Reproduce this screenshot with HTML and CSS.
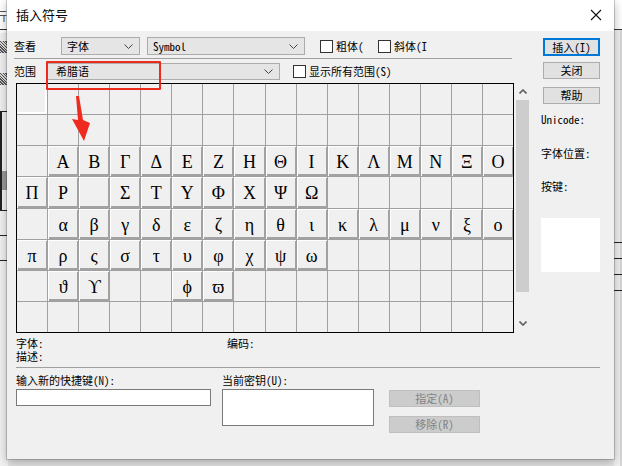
FILE: index.html
```html
<!DOCTYPE html>
<html lang="zh-CN">
<head>
    <meta charset="UTF-8">
    <title>插入符号</title>
    <link rel="stylesheet" href="styles.css">
</head>
<body>
<div class="desktop">

    <!-- the window behind the dialog -->
    <div class="app">
        <div class="app-bar"><span class="app-title">行</span></div>
        <div class="app-body">
            <div class="app-side">
                <div class="hatch"></div>
                <div class="hatch"></div>
                <div class="frame"></div>
                <div class="tick"></div>
                <div class="tick"></div>
            </div>
            <div class="app-fill"></div>
            <div class="app-edge">
                <div class="rule"></div>
                <div class="rule"></div>
                <div class="rule"></div>
                <div class="rule"></div>
            </div>
        </div>
    </div>

    <div class="dialog">
        <div class="titlebar">
            <span class="title">插入符号</span>
            <svg class="close" width="12" height="12" viewBox="0 0 12 12"><path d="M1 1 L11 11 M11 1 L1 11" stroke="#111" stroke-width="1.1"/></svg>
        </div>

        <div class="dialog-body">
            <div class="main">
                <div class="row row-view">
                    <span class="lbl lbl-view">查看</span>
                    <div class="select sel-kind"><span>字体</span><svg width="9" height="5" viewBox="0 0 9 5"><path d="M0.5 0.5 L4.5 4.5 L8.5 0.5" fill="none" stroke="#444"/></svg></div>
                    <div class="select sel-font"><span>Symbol</span><svg width="9" height="5" viewBox="0 0 9 5"><path d="M0.5 0.5 L4.5 4.5 L8.5 0.5" fill="none" stroke="#444"/></svg></div>
                    <span class="check check-bold"><span class="box"></span>粗体(</span>
                    <span class="check"><span class="box"></span>斜体(I</span>
                </div>
                <div class="sep"></div>
                <div class="row row-range">
                    <span class="lbl lbl-range">范围</span>
                    <div class="select sel-range"><span>希腊语</span><svg width="9" height="5" viewBox="0 0 9 5"><path d="M0.5 0.5 L4.5 4.5 L8.5 0.5" fill="none" stroke="#444"/></svg></div>
                    <span class="check check-all"><span class="box"></span>显示所有范围(S)</span>
                </div>

                <div class="chart">
                    <div class="grid">
                        <!-- row 1 -->
                        <span class="cell focus"></span><span class="cell"></span><span class="cell"></span><span class="cell"></span><span class="cell"></span><span class="cell"></span><span class="cell"></span><span class="cell"></span><span class="cell"></span><span class="cell"></span><span class="cell"></span><span class="cell"></span><span class="cell"></span><span class="cell"></span><span class="cell"></span><span class="cell"></span>
                        <!-- row 2 -->
                        <span class="cell"></span><span class="cell"></span><span class="cell"></span><span class="cell"></span><span class="cell"></span><span class="cell"></span><span class="cell"></span><span class="cell"></span><span class="cell"></span><span class="cell"></span><span class="cell"></span><span class="cell"></span><span class="cell"></span><span class="cell"></span><span class="cell"></span><span class="cell"></span>
                        <!-- row 3: U+0390 -->
                        <span class="cell"></span><span class="cell on">Α</span><span class="cell on">Β</span><span class="cell on">Γ</span><span class="cell on">Δ</span><span class="cell on">Ε</span><span class="cell on">Ζ</span><span class="cell on">Η</span><span class="cell on">Θ</span><span class="cell on">Ι</span><span class="cell on">Κ</span><span class="cell on">Λ</span><span class="cell on">Μ</span><span class="cell on">Ν</span><span class="cell on">Ξ</span><span class="cell on">Ο</span>
                        <!-- row 4: U+03A0 -->
                        <span class="cell on">Π</span><span class="cell on">Ρ</span><span class="cell on"></span><span class="cell on">Σ</span><span class="cell on">Τ</span><span class="cell on">Υ</span><span class="cell on">Φ</span><span class="cell on">Χ</span><span class="cell on">Ψ</span><span class="cell on">Ω</span><span class="cell"></span><span class="cell"></span><span class="cell"></span><span class="cell"></span><span class="cell"></span><span class="cell"></span>
                        <!-- row 5: U+03B0 -->
                        <span class="cell"></span><span class="cell on">α</span><span class="cell on">β</span><span class="cell on">γ</span><span class="cell on">δ</span><span class="cell on">ε</span><span class="cell on">ζ</span><span class="cell on">η</span><span class="cell on">θ</span><span class="cell on">ι</span><span class="cell on">κ</span><span class="cell on">λ</span><span class="cell on">μ</span><span class="cell on">ν</span><span class="cell on">ξ</span><span class="cell on">ο</span>
                        <!-- row 6: U+03C0 -->
                        <span class="cell on">π</span><span class="cell on">ρ</span><span class="cell on">ς</span><span class="cell on">σ</span><span class="cell on">τ</span><span class="cell on">υ</span><span class="cell on">φ</span><span class="cell on">χ</span><span class="cell on">ψ</span><span class="cell on">ω</span><span class="cell"></span><span class="cell"></span><span class="cell"></span><span class="cell"></span><span class="cell"></span><span class="cell"></span>
                        <!-- row 7: U+03D0 -->
                        <span class="cell"></span><span class="cell on">ϑ</span><span class="cell on">ϒ</span><span class="cell"></span><span class="cell"></span><span class="cell on">ϕ</span><span class="cell on">ϖ</span><span class="cell"></span><span class="cell"></span><span class="cell"></span><span class="cell"></span><span class="cell"></span><span class="cell"></span><span class="cell"></span><span class="cell"></span><span class="cell"></span>
                        <!-- row 8 -->
                        <span class="cell"></span><span class="cell"></span><span class="cell"></span><span class="cell"></span><span class="cell"></span><span class="cell"></span><span class="cell"></span><span class="cell"></span><span class="cell"></span><span class="cell"></span><span class="cell"></span><span class="cell"></span><span class="cell"></span><span class="cell"></span><span class="cell"></span><span class="cell"></span>
                    </div>
                    <div class="scroll">
                        <svg class="arrow-up" width="8" height="5" viewBox="0 0 8 5"><path d="M0.5 4.5 L4 1 L7.5 4.5" fill="none" stroke="#606060" stroke-width="1.6"/></svg>
                        <div class="thumb"></div>
                        <svg class="arrow-down" width="8" height="5" viewBox="0 0 8 5"><path d="M0.5 0.5 L4 4 L7.5 0.5" fill="none" stroke="#606060" stroke-width="1.6"/></svg>
                    </div>
                </div>

                <div class="info info-top">
                    <span class="info-font">字体:</span><span>编码:</span>
                </div>
                <div class="info">描述:</div>

                <!-- annotation drawn over the dialog -->
                <div class="mark"></div>
                <svg class="pointer" width="22" height="47" viewBox="0 0 22 47"><path d="M6 1 L9 1 L13 25 L20 28 L14 46 L2 24 L8 25 Z" fill="#ef2a1f"/></svg>
            </div>

            <div class="side">
                <button class="btn btn-default">插入(I)</button>
                <button class="btn btn-close">关闭</button>
                <button class="btn btn-help">帮助</button>
                <div class="side-lbl side-code">Unicode:</div>
                <div class="side-lbl side-pos">字体位置:</div>
                <div class="side-lbl side-key">按键:</div>
                <div class="preview"></div>
            </div>

            <div class="bottom">
                <div class="sep-wide"></div>
                <div class="keys">
                    <div class="key-new">
                        <div class="key-lbl">输入新的快捷键(N):</div>
                        <div class="field"></div>
                    </div>
                    <div class="key-cur">
                        <div class="key-lbl">当前密钥(U):</div>
                        <div class="field field-tall"></div>
                    </div>
                    <div class="key-btns">
                        <button class="btn-off">指定(A)</button>
                        <button class="btn-off">移除(R)</button>
                    </div>
                </div>
            </div>
        </div>
    </div>
</div>
</body>
</html>
```

FILE: styles.css
```css
* {
    box-sizing: border-box;
}

body {
    margin: 0;
    width: 622px;
    height: 466px;
    overflow: hidden;
    background: #e6e6e6;
    color: #000;
    font-family: "Noto Sans Mono CJK SC", "Liberation Mono", "Noto Sans CJK SC", monospace;
    font-size: 11px;
    line-height: 13px;
}

.desktop {
    position: relative;
    width: 622px;
    height: 466px;
}

/* background window */
.app {
    height: 100%;
    display: flex;
    flex-direction: column;
}

.app-bar {
    height: 30px;
    background: #fff;
    border-bottom: 1px solid #333;
    padding-top: 9px;
    overflow: hidden;
}

.app-title {
    display: block;
    width: 7px;
    overflow: hidden;
    direction: rtl;
    font-family: "Noto Sans CJK SC", sans-serif;
    font-size: 13px;
    color: #555;
}

.app-body {
    flex: 1;
    display: flex;
}

.app-side {
    width: 8px;
    background: #f2f2f2;
    border-top: 3px solid #fff;
    display: flex;
    flex-direction: column;
}

.hatch {
    height: 12px;
    margin: 8px 0 12px 0;
    background: repeating-linear-gradient(45deg, #555 0 1px, #ddd 1px 2px);
}

.frame {
    height: 100px;
    margin-top: 14px;
    border-top: 1px solid #222;
    border-left: 2px solid #222;
    border-bottom: 1px solid #222;
    background: linear-gradient(#f2f2f2 0 60%, #9a9a9a 60% 80%, #f2f2f2 80%);
}

.tick {
    height: 1px;
    margin-top: 24px;
    background: #222;
}

.app-fill {
    flex: 1;
}

.app-edge {
    width: 8px;
    margin-left: auto;
    background: linear-gradient(90deg, #f0f0f0 0 6px, #d6d6d6 6px);
    padding-top: 212px;
}

.rule {
    height: 1px;
    background: #222;
    margin-bottom: 15px;
}

/* dialog */
.dialog {
    position: absolute;
    left: 7px;
    top: 0;
    width: 607px;
    height: 459px;
    background: #f0f0f0;
    box-shadow: 0 0 0 1px rgba(0, 0, 0, 0.18), 0 3px 10px rgba(0, 0, 0, 0.3);
}

.titlebar {
    height: 31px;
    background: #fff;
    display: flex;
    align-items: center;
    justify-content: space-between;
    padding: 0 12px 2px 9px;
}

.title {
    font-family: "Noto Sans CJK SC", sans-serif;
    font-size: 13px;
}

.dialog-body {
    display: grid;
    grid-template-columns: 515px 60px;
    column-gap: 12px;
    padding: 6px 13px 0 7px;
}

.main {
    position: relative;
}

.row {
    display: flex;
    align-items: center;
}

.row-view {
    height: 18px;
}

.row-range {
    height: 17px;
    margin-top: 4px;
}

.lbl-view {
    width: 47px;
}

.lbl-range {
    width: 32px;
}

.select {
    height: 100%;
    display: flex;
    align-items: center;
    justify-content: space-between;
    padding: 0 6px 0 5px;
    background: #e5e5e5;
    border: 1px solid #acacac;
}

.sel-kind {
    width: 79px;
}

.sel-font {
    width: 158px;
    margin-left: 7px;
}

.sel-range {
    width: 234px;
    padding-left: 9px;
}

.check {
    display: flex;
    align-items: center;
    gap: 3px;
}

.box {
    width: 13px;
    height: 13px;
    background: #fff;
    border: 1px solid #333;
}

.check-bold {
    width: 58px;
    margin-left: 15px;
}

.check-all {
    margin-left: 13px;
}

.sep {
    width: 498px;
    height: 1px;
    margin-top: 3px;
    background: #a0a0a0;
}

/* character map */
.chart {
    display: flex;
    height: 250px;
    margin-top: 3px;
}

.grid {
    width: 498px;
    margin-left: 2px;
    display: grid;
    grid-template-columns: repeat(16, 1fr);
    grid-template-rows: repeat(8, 1fr);
    gap: 1px;
    background: #a0a0a0;
    border: 1px solid #000;
}

.cell {
    background: #f0f0f0;
    display: flex;
    align-items: center;
    justify-content: center;
    padding-top: 2px;
    font-family: "Liberation Serif", "DejaVu Serif", serif;
    font-size: 18px;
    line-height: 1;
}

.cell.on {
    box-shadow: inset 1px 1px 0 #fff, inset -1px -2px 0 #a2a2a2;
}

.cell.focus {
    box-shadow: inset -2px -2px 0 #fff;
}

.scroll {
    width: 13px;
    margin-left: 2px;
    display: flex;
    flex-direction: column;
    align-items: center;
}

.arrow-up {
    margin-top: 6px;
}

.thumb {
    width: 13px;
    height: 192px;
    margin-top: 6px;
    background: #cdcdcd;
}

.arrow-down {
    margin-top: 29px;
}

.info {
    display: flex;
    margin-left: 2px;
}

.info-top {
    margin-top: 4px;
}

.info-font {
    width: 211px;
}

.mark {
    position: absolute;
    left: 32px;
    top: 24px;
    width: 115px;
    height: 29px;
    border: 2px solid #ec2a1e;
    border-radius: 1px;
}

.pointer {
    position: absolute;
    left: 56px;
    top: 58px;
}

/* right column */
.side {
    display: flex;
    flex-direction: column;
}

.btn {
    width: 57px;
    height: 17px;
    margin-left: 2px;
    padding: 0;
    background: #e1e1e1;
    border: 1px solid #adadad;
    font: inherit;
    color: #000;
}

.btn-default {
    height: 18px;
    margin-top: 1px;
    border: 2px solid #0078d7;
}

.btn-close {
    margin-top: 6px;
}

.btn-help {
    margin-top: 8px;
}

.side-code {
    margin-top: 9px;
}

.side-pos {
    margin-top: 21px;
}

.side-key {
    margin-top: 20px;
}

.preview {
    width: 59px;
    height: 54px;
    margin-top: 25px;
    background: #fff;
}

/* shortcut keys */
.bottom {
    grid-column: 1 / -1;
}

.sep-wide {
    width: 584px;
    height: 1px;
    margin: 4px 0 0 2px;
    background: #a0a0a0;
}

.keys {
    display: flex;
    margin: 6px 0 0 2px;
}

.key-new {
    width: 195px;
}

.key-cur {
    width: 152px;
    margin-left: 11px;
}

.key-lbl {
    height: 13px;
}

.field {
    height: 17px;
    margin-top: 2px;
    background: #fff;
    border: 1px solid #7a7a7a;
}

.field-tall {
    height: 37px;
}

.key-btns {
    width: 91px;
    margin-left: 15px;
    padding-top: 16px;
    display: flex;
    flex-direction: column;
    gap: 9px;
}

.btn-off {
    height: 17px;
    padding: 0;
    background: #cccccc;
    border: 1px solid #bfbfbf;
    font: inherit;
    color: #838383;
}
```
